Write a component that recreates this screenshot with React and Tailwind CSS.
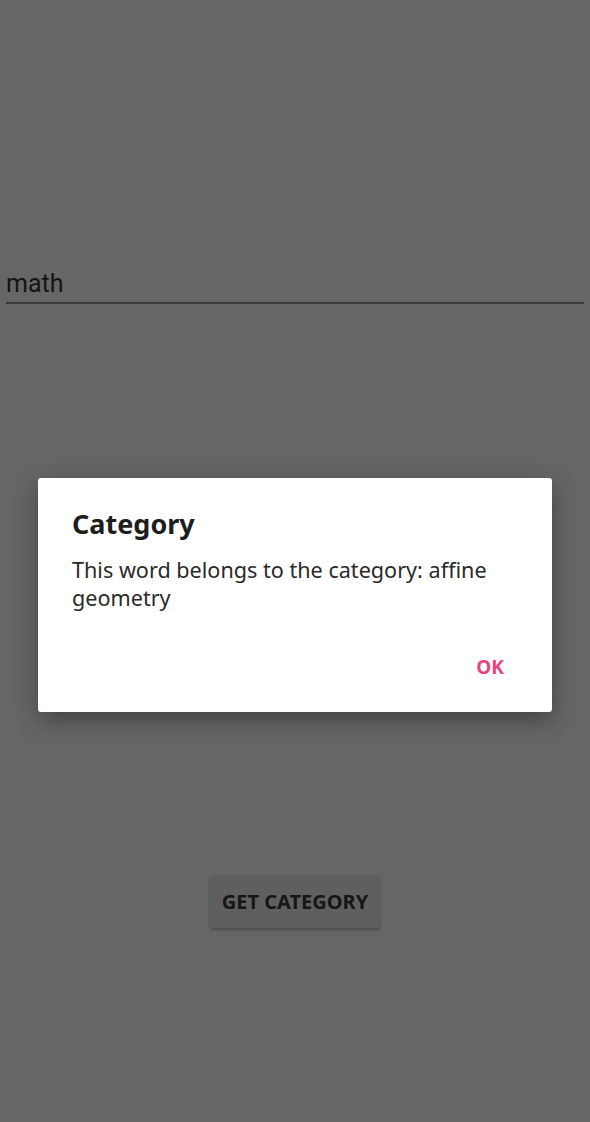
export default function App() {
  return (
    <div className="relative min-h-[1122px] w-full bg-[#666666]" style={{ fontFamily: '"Noto Sans", sans-serif' }}>
      <div className="px-[6px] pt-[266px]">
        <div className="h-[36px] text-[25px] leading-[36px] text-[#141414]" style={{ fontFamily: 'Roboto, sans-serif' }}>math</div>
        <div className="h-[2px] bg-[#3c3c3c]"></div>
      </div>
      <div className="flex justify-center pt-[571px]">
        <div className="flex h-[53px] items-center rounded-[2px] bg-[#5f5f5f] px-[12px] text-[20px] font-bold tracking-[0px] text-[#161616] shadow-[0_2px_3px_rgba(0,0,0,0.25)]">
          GET CATEGORY
        </div>
      </div>
      <div className="absolute left-[38px] top-[478px] h-[234px] w-[514px] rounded-[3px] bg-white shadow-[0_8px_24px_rgba(0,0,0,0.35)]">
        <div className="px-[34px] pt-[28px]">
          <div className="text-[27px] font-bold leading-[36px] text-[#1e1e1e]">Category</div>
          <div className="mt-[14px] text-[21.6px] leading-[28px] text-[#2a2a2a]">This word belongs to the category: affine geometry</div>
        </div>
        <div className="absolute right-[48px] top-[176px] text-[19px] font-bold leading-[26px] text-[#e8437d]">OK</div>
      </div>
    </div>
  );
}
